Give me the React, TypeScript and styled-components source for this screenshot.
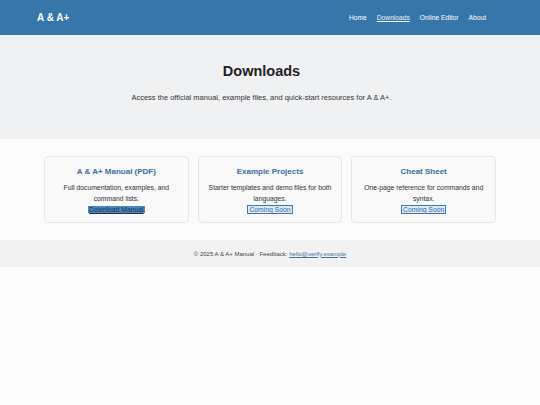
import React from "react";
import styled, { createGlobalStyle } from "styled-components";

const GlobalStyle = createGlobalStyle`
  html, body {
    margin: 0;
    padding: 0;
    background: #fbfbfb;
    font-family: "Liberation Sans", Arial, sans-serif;
    color: #222;
  }
`;

type Resource = { title: string; text: string; link: string; ready: boolean };

const resources: Resource[] = [
  { title: "A & A+ Manual (PDF)", text: "Full documentation, examples, and command lists.", link: "Download Manual", ready: true },
  { title: "Example Projects", text: "Starter templates and demo files for both languages.", link: "Coming Soon", ready: false },
  { title: "Cheat Sheet", text: "One-page reference for commands and syntax.", link: "Coming Soon", ready: false },
];

const Header = styled.header`
  background: #3776ab;
  height: 35px;
  display: flex;
  align-items: center;
  justify-content: space-between;
  padding: 0 54px 0 37px;
`;

const Logo = styled.div`
  color: #fff;
  font-weight: bold;
  font-size: 10px;
`;

const Nav = styled.nav`
  display: flex;
  gap: 10px;
`;

const NavLink = styled.a<{ $active?: boolean }>`
  color: #fff;
  font-size: 6.7px;
  text-decoration: ${(p) => (p.$active ? "underline" : "none")};
  opacity: ${(p) => (p.$active ? 0.9 : 1)};
`;

const Hero = styled.section`
  background: #eff1f3;
  height: 104px;
  display: flex;
  flex-direction: column;
  align-items: center;
  padding: 28px 17px 0 0;
  box-sizing: border-box;
`;

const Title = styled.h1`
  margin: 0;
  font-size: 14.5px;
  font-weight: bold;
  color: #222;
`;

const Lead = styled.p`
  margin: 14px 0 0;
  font-size: 7.5px;
  color: #333;
`;

const Main = styled.main`
  padding: 17px 44px;
  display: grid;
  grid-template-columns: repeat(3, 1fr);
  gap: 9px;
`;

const Card = styled.div`
  background: #f9f9f9;
  border: 1px solid #e6e6e6;
  border-radius: 4px;
  height: 67px;
  box-sizing: border-box;
  padding: 10px 6px 0;
  text-align: center;
  font-size: 6.8px;
  line-height: 11px;
`;

const CardTitle = styled.h3`
  margin: 0;
  font-size: 8px;
  line-height: 10px;
  color: #3a6fa6;
  font-weight: bold;
`;

const CardText = styled.p`
  margin: 5px 0 0;
  color: #333;
`;

const CardLink = styled.a<{ $ready: boolean }>`
  font-size: 6.8px;
  text-decoration: underline;
  padding: 0 1px;
  background: ${(p) => (p.$ready ? "#4a86c0" : "#dfeaf5")};
  color: ${(p) => (p.$ready ? "#1c3555" : "#2f6aa5")};
  outline: ${(p) => (p.$ready ? "none" : "1px solid #3b78b5")};
`;

const Footer = styled.footer`
  background: #f2f2f2;
  height: 27px;
  display: flex;
  align-items: center;
  justify-content: center;
  font-size: 6px;
  color: #444;
  white-space: pre;
`;

const Mail = styled.a`
  color: #3a6fa6;
  text-decoration: underline;
`;

export default function App() {
  return (
    <>
      <GlobalStyle />
      <Header>
        <Logo>A &amp; A+</Logo>
        <Nav>
          <NavLink>Home</NavLink>
          <NavLink $active>Downloads</NavLink>
          <NavLink>Online Editor</NavLink>
          <NavLink>About</NavLink>
        </Nav>
      </Header>
      <Hero>
        <Title>Downloads</Title>
        <Lead>Access the official manual, example files, and quick-start resources for A &amp; A+.</Lead>
      </Hero>
      <Main>
        {resources.map((r) => (
          <Card key={r.title}>
            <CardTitle>{r.title}</CardTitle>
            <CardText>{r.text}</CardText>
            <CardLink $ready={r.ready}>{r.link}</CardLink>
          </Card>
        ))}
      </Main>
      <Footer>
        © 2025 A &amp; A+ Manual · Feedback: <Mail>hello@verify.example</Mail>
      </Footer>
    </>
  );
}
